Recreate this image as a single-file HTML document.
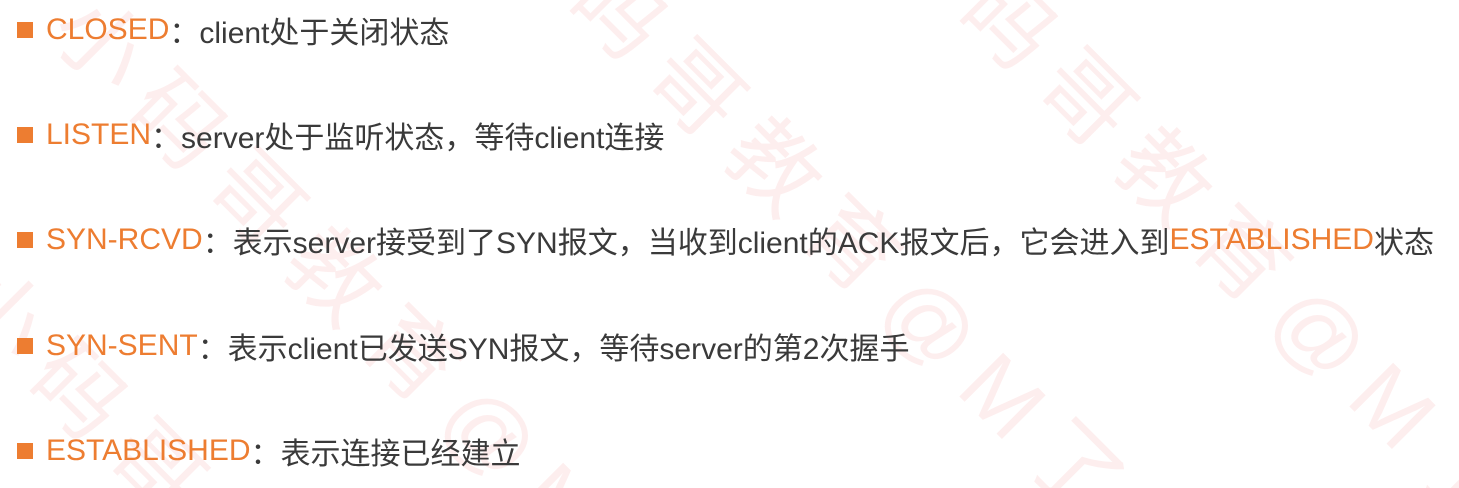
<!DOCTYPE html>
<html><head><meta charset="utf-8"><style>
html,body{margin:0;padding:0;background:#fff;width:1459px;height:488px;overflow:hidden;position:relative}
.wc{position:absolute;left:0;top:0;width:1459px;height:488px;overflow:hidden}
.wm{position:absolute;font-family:"Liberation Sans","Noto Sans CJK SC",sans-serif;font-size:90px;color:rgba(240,90,90,0.10);transform:rotate(45deg);transform-origin:left top;white-space:nowrap;letter-spacing:20px}
.line{position:absolute;left:17px;height:40px;display:flex;align-items:center;white-space:nowrap;font-family:"Liberation Sans","Noto Sans CJK SC",sans-serif;font-size:30px;color:#3a3a3a}
.b{width:16px;height:16px;background:#ED7D31;margin-right:13px;flex:none}
.o{color:#ED7D31}
</style></head><body>
<div class="wc">
<div class="wm" style="left:560px;top:-150px">小码哥教育@M了个J</div>
<div class="wm" style="left:950px;top:-140px">小码哥教育@M了个J</div>
<div class="wm" style="left:120px;top:-40px">小码哥教育@M了个J</div>
<div class="wm" style="left:20px;top:230px">小码哥教育@M了个J</div>
</div>
<div class="line" style="top:10px"><span class="b"></span><span class="o">CLOSED</span>：client处于关闭状态</div>
<div class="line" style="top:115px"><span class="b"></span><span class="o">LISTEN</span>：server处于监听状态，等待client连接</div>
<div class="line" style="top:220px"><span class="b"></span><span class="o">SYN-RCVD</span>：表示server接受到了SYN报文，当收到client的ACK报文后，它会进入到<span class="o">ESTABLISHED</span>状态</div>
<div class="line" style="top:326px"><span class="b"></span><span class="o">SYN-SENT</span>：表示client已发送SYN报文，等待server的第2次握手</div>
<div class="line" style="top:431px"><span class="b"></span><span class="o">ESTABLISHED</span>：表示连接已经建立</div>
</body></html>
